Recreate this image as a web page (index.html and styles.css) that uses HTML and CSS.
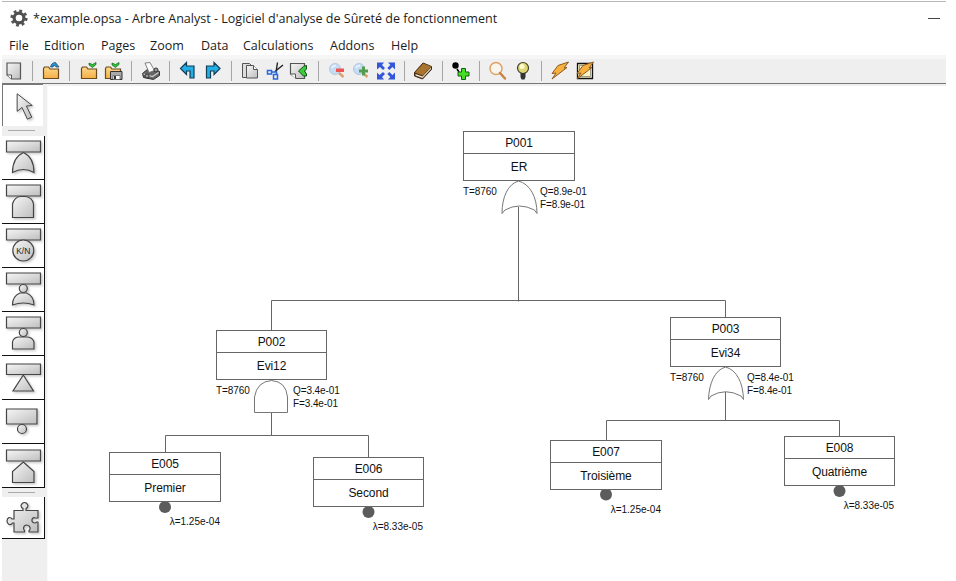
FILE: index.html
```html
<!DOCTYPE html>
<html lang="fr">
<head>
<meta charset="utf-8">
<title>Arbre Analyst</title>
<link rel="stylesheet" href="styles.css">
</head>
<body>
<svg class="defs" width="0" height="0">
  <defs>
    <linearGradient id="metal" x1="0" y1="0" x2="1" y2="1"><stop offset="0" stop-color="#f6f6f6"/><stop offset="1" stop-color="#bebebe"/></linearGradient>
    <linearGradient id="gold" x1="0" y1="0" x2="0" y2="1"><stop offset="0" stop-color="#ffd98a"/><stop offset="1" stop-color="#f4ae45"/></linearGradient>
    <filter id="shade" x="-20%" y="-20%" width="150%" height="150%"><feDropShadow dx="1.5" dy="1.5" stdDeviation="1" flood-color="#000" flood-opacity=".22"/></filter>
    <symbol id="folder" viewBox="0 0 20 20"><path d="M2.500 17.500V7.500l1-1.500h4l1.500 2h8.500v9.500z" fill="url(#gold)" stroke="#6b4a20" stroke-width="1.200"/></symbol>
    <symbol id="bolt" viewBox="0 0 20 20"><path d="M8 4.500L18.500 1l-4.500 6 3-.5L2 18l4-6-4 .5z" fill="#f8b040" stroke="#8a5a20"/></symbol>
    <symbol id="lens" viewBox="0 0 20 20"><path d="M11 11l5.500 5" stroke="#dda070" stroke-width="2.500"/><circle cx="8" cy="8" r="5.500" fill="#c4dcf4" stroke="#b4c8e0"/><path d="M5 7q1-2.500 4-2.500" stroke="#eef6ff" stroke-width="1.500" fill="none"/></symbol>
  </defs>
</svg>
<div class="window">
  <header class="titlebar">
    <svg class="gear" viewBox="0 0 18 18"><circle cx="9" cy="9" r="7.200" fill="none" stroke="#555" stroke-width="2.800" stroke-dasharray="2.830 2.825"/><circle cx="9" cy="9" r="4.900" fill="none" stroke="#505050" stroke-width="3.200"/></svg>
    <span class="title">*example.opsa - Arbre Analyst - Logiciel d'analyse de Sûreté de fonctionnement</span>
    <span class="minimize"></span>
  </header>
  <nav class="menu">
    <span class="w35">File</span><span class="w57">Edition</span><span class="w49">Pages</span><span class="w51">Zoom</span><span class="w42">Data</span><span class="w87">Calculations</span><span class="w61">Addons</span><span>Help</span>
  </nav>
  <div class="toolbar">
    <div class="group"><svg viewBox="0 0 20 20"><path d="M3 2h13.500v16h-9L3 14z" fill="url(#metal)" stroke="#555" stroke-width="1.200"/><path d="M3 14h4.500v4" fill="#fff" stroke="#555"/></svg></div>
    <div class="group"><svg viewBox="0 0 20 20"><use href="#folder"/><path d="M9.500 6q1-4.500 5-4.500L18 6h-3l-1-1.500Q12 4.500 12 6z" fill="#2595d0" stroke="#173f60" stroke-width=".7"/></svg></div>
    <div class="group"><svg viewBox="0 0 20 20"><use href="#folder"/><path d="M10 2l3.500 1.500L17 1.500v2l-3.500 3L10 4z" fill="#31c43b" stroke="#12611a" stroke-width=".7"/></svg><svg viewBox="0 0 20 20"><use href="#folder"/><path d="M9 2l3.500 1.500L16 1.500v2l-3.500 3L9 4z" fill="#31c43b" stroke="#12611a" stroke-width=".7"/><path d="M7.500 10.500h11.500v8H7.500z" fill="#aaa" stroke="#333"/><path d="M10 14.500h7v4h-7z" fill="#fff" stroke="#444" stroke-width=".6"/><path d="M11 15h2v3h-2z" fill="#333"/></svg></div>
    <div class="group"><svg viewBox="0 0 20 20"><path d="M1.500 12.500l6-5 11 3v4l-6 4-10-2z" fill="#666" stroke="#333"/><path d="M4 2l5-.5 4.500 8-5.500 2z" fill="#fafafa" stroke="#666" stroke-width=".8"/><path d="M2.500 13l9 2.500 6-4" stroke="#ccc" fill="none" stroke-width="1.200"/><circle cx="6" cy="15" r="2" fill="#999" stroke="#333"/><circle cx="15" cy="9" r="2" fill="#999" stroke="#333"/></svg></div>
    <div class="group"><svg viewBox="0 0 20 20"><path d="M2.500 7.500l6-6v3.500h7.500v12h-4V10H8.500v3.500z" fill="#24aee6" stroke="#123d57" stroke-width="1.200"/></svg><svg viewBox="0 0 20 20"><path d="M17 7.500l-6-6v3.500H3.500v12h4V10H11v3.500z" fill="#24aee6" stroke="#123d57" stroke-width="1.200"/></svg></div>
    <div class="group"><svg viewBox="0 0 20 20"><path d="M2.500 2.500h7l3 3v11h-10z" fill="#ddd" stroke="#555"/><path d="M6.500 4.500h7l4 4v8.500h-11z" fill="url(#metal)" stroke="#555"/><path d="M13.500 4.500v4h4" fill="#fff" stroke="#555"/></svg><svg viewBox="0 0 20 20"><path d="M12.500 1.500L11 11M18 4l-8 6.500" stroke="#222" stroke-width="1.400"/><path d="M2.500 9.500h4v3.500h-4zM8.500 13.500h4v4.500h-4zM6.500 11h5v3" fill="none" stroke="#2868d8" stroke-width="1.500"/></svg><svg viewBox="0 0 20 20"><path d="M1.500 2.500h14v15h-8L1.500 13z" fill="url(#metal)" stroke="#555" stroke-width="1.200"/><path d="M1.500 13h5v4.500" fill="#fff" stroke="#555"/><path d="M17.500 4.500q-1 0-3 1L9.500 10l5 5h3V13l-2-3 2-2z" fill="#3ace3a" stroke="#164d1c"/></svg></div>
    <div class="group"><svg viewBox="0 0 20 20"><use href="#lens"/><path d="M9 7.500h8v3.500H9z" fill="#ef5550"/></svg><svg viewBox="0 0 20 20"><use href="#lens"/><path d="M11 5.500h3v3h3v3h-3v3h-3v-3H8v-3h3z" fill="#549c4f"/></svg><svg viewBox="0 0 20 20"><path d="M1 1.500h7L6 4l3 3-2 2-3-3-3 2.500zM19 1.500v7L16.500 6l-3.200 3-2-2 3-3-2.300-2.500zM1 18.500v-7L3.500 14 7 11l2 2-3 3 2 2.500zM19 18.500h-7l2.300-2.500-3-3 2-2 3.200 3L19 11.500z" fill="#3457d9"/></svg></div>
    <div class="group"><svg viewBox="0 0 20 20"><path d="M1.500 11.500L10 2l8.500 3.500v3L9.500 18l-8-3z" fill="#4b3115" stroke="#40280e"/><path d="M2 11.500L10.200 2.500l8 3-8.500 9z" fill="#a8742e"/><path d="M2.500 13l7 2.500 8.500-9v1.500l-8.500 9-7-2.500z" fill="#f0e8d8"/></svg></div>
    <div class="group"><svg viewBox="0 0 20 20"><circle cx="4.500" cy="4.500" r="3.200" fill="#000"/><path d="M6 8l2 3" stroke="#000" stroke-width="1.500"/><path d="M10.500 7.500h4V11H18v4h-3.500v3.500h-4V15H7v-4h3.500z" fill="#48dd25" stroke="#145d19"/></svg></div>
    <div class="group"><svg viewBox="0 0 20 20"><circle cx="8" cy="7.500" r="6" fill="#f8f5ee" stroke="#dfa267" stroke-width="1.500"/><path d="M12 12l5 5.500" stroke="#c98343" stroke-width="2.500" stroke-linecap="round"/></svg><svg viewBox="0 0 20 20"><circle cx="10" cy="7" r="5.500" fill="#ded774" stroke="#40402c" stroke-width="1.200"/><circle cx="9" cy="5.500" r="2.500" fill="#fffbd0"/><path d="M7.500 12h5v4l-1 2.500h-3l-1-2.500z" fill="#333"/></svg></div>
    <div class="group"><svg viewBox="0 0 20 20"><use href="#bolt"/></svg><svg viewBox="0 0 20 20"><path d="M2.500 2.500h15v15h-15z" fill="#fbf3c4" stroke="#111" stroke-width="1.300"/><path d="M4.500 4.500h11v11h-11z" fill="none" stroke="#777" stroke-width=".7"/><use href="#bolt"/></svg></div>
  </div>
  <main class="workspace">
    <aside class="palette">
      <div class="tool pressed"><svg viewBox="0 0 41 41"><path d="M14.500 8.500v18l5-4 5.500 12 4.500-2-5.500-11.500 6-.5z" fill="url(#metal)" stroke="#444" filter="url(#shade)"/></svg></div>
      <div class="rule"></div>
      <div class="tool"><svg viewBox="0 0 42 44"><g class="shape"><path d="M4.500 5h34v11h-34z"/><path d="M10.500 36.500q0-15 11-20 10.500 5 10.500 20-10.500-6-21.500 0z"/></g></svg></div>
      <div class="tool"><svg viewBox="0 0 42 44"><g class="shape"><path d="M4.500 5h34v11h-34z"/><path d="M10.500 37.500V24q2-7 8-7.500h5q7 1 8 7.500v13.500z"/></g></svg></div>
      <div class="tool"><svg viewBox="0 0 42 44"><g class="shape"><path d="M4.500 5h34v11h-34z"/><circle cx="21.300" cy="26.500" r="10.500"/></g><text class="kn" x="21.300" y="29.500">K/N</text></svg></div>
      <div class="tool"><svg viewBox="0 0 42 44"><g class="shape"><path d="M4.500 5h34v11h-34z"/><path d="M10.500 37q0-9 7.500-12h6.500q7.500 3 7.500 12-10.500-4-21.500 0z"/><circle cx="21.300" cy="20.500" r="4"/></g></svg></div>
      <div class="tool"><svg viewBox="0 0 42 44"><g class="shape"><path d="M4.500 5h34v11h-34z"/><path d="M10.500 37v-7q1-5 7-5h7q6 0 7.500 5v7z"/><circle cx="21.300" cy="20.500" r="4"/></g></svg></div>
      <div class="tool"><svg viewBox="0 0 42 44"><g class="shape"><path d="M4.500 8h34v10.500h-34z"/><path d="M21.300 19L11 35h20.500z"/></g></svg></div>
      <div class="tool"><svg viewBox="0 0 42 44"><g class="shape"><path d="M4.500 9h30.500v15h-30.500z"/><circle cx="20" cy="29" r="4.500"/></g></svg></div>
      <div class="tool"><svg viewBox="0 0 42 44"><g class="shape"><path d="M4.500 6h34v11h-34z"/><path d="M21.300 18L32 27.500V38.500H10.500v-11z"/></g></svg></div>
      <div class="rule low"></div>
      <div class="tool last"><svg viewBox="0 0 42 44"><path class="shape" d="M12 13.500h9v-2q-2-1-2-3 1-3 3.500-3t3.500 3q0 2-2 3v2h12v7.500h-3q-2-1-3 1.500-.5 3 2.500 3.500 2 0 2-1h1.500v10H27v-1.500q1.500-1 1-3-1-2.500-3.500-2.500t-3 3q0 1.500 1 2.500v1.500H12V26h-1.500q-1 2-3.500 1.500-2-1-2-3.500t2-3.500q2.500 0 3 1.500h2z"/></svg></div>
    </aside>
    <section class="canvas">
      <svg class="wires" viewBox="48 86 898 495">
        <path d="M518.500 207V301.500M271.500 330V300.500H725.500V317M271.500 412V435.500M165.500 452V435.500H368.500V458M725.500 392V420.500M606.500 440V420.500H839.500V437"/>
        <g class="gate"><path d="M502 213.500C502 197 508 184 518.500 181 530 184 537 197 537 213.500L534.500 210Q519 202 505 210z"/><path d="M708.500 399.500C709 383 715 370 725.500 367 737 370 743 383 743.500 399.500L741 396Q725.500 387.500 711 396z"/><path d="M254.500 412.500V397Q257 381.500 271.500 380.500 286 381.500 287.500 397V412.500z"/></g>
        <g class="event"><circle cx="165" cy="507" r="6"/><circle cx="368.500" cy="512" r="6"/><circle cx="606" cy="494.500" r="6"/><circle cx="839.500" cy="491" r="6"/></g>
      </svg>
      <article class="node p001"><b>P001</b><p>ER</p><i>T=8760</i><em>Q=8.9e-01<br>F=8.9e-01</em></article>
      <article class="node p002"><b>P002</b><p>Evi12</p><i>T=8760</i><em>Q=3.4e-01<br>F=3.4e-01</em></article>
      <article class="node p003"><b>P003</b><p>Evi34</p><i>T=8760</i><em>Q=8.4e-01<br>F=8.4e-01</em></article>
      <article class="node e005"><b>E005</b><p>Premier</p><u>λ=1.25e-04</u></article>
      <article class="node e006"><b>E006</b><p>Second</p><u>λ=8.33e-05</u></article>
      <article class="node e007"><b>E007</b><p>Troisième</p><u>λ=1.25e-04</u></article>
      <article class="node e008"><b>E008</b><p>Quatrième</p><u>λ=8.33e-05</u></article>
    </section>
  </main>
</div>
</body>
</html>
```
FILE: styles.css
```css
* { box-sizing: border-box; }
body { margin: 0; background: #fff; height: 581px; overflow: hidden; font-family: "Open Sans", "Noto Sans", sans-serif; font-size: 12.5px; color: #1c1c1c; }
.defs { display: block; height: 0; }
.window { margin: 1px 10px 0 2px; height: 580px; border-top: 1px solid #b4b8b6; display: flex; flex-direction: column; }
.titlebar { height: 34px; display: flex; align-items: center; padding: 0 6px 2px 8px; }
.gear { width: 18px; height: 18px; margin-right: 5px; }
.title { white-space: nowrap; font-size: 12.55px; }
.minimize { margin-left: auto; width: 12px; height: 1px; background: #444; }
.menu { height: 19px; display: flex; align-items: center; padding: 1px 0 0 7px; line-height: 18px; }
.w35 { width: 35px; } .w57 { width: 57px; } .w49 { width: 49px; } .w51 { width: 51px; }
.w42 { width: 42px; } .w87 { width: 87px; } .w61 { width: 61px; }
.toolbar { height: 29px; background: #efefef; border-top: 4px solid #f6f6f6; border-bottom: 1px solid #777; display: flex; align-items: center; padding: 0 0 1px 2px; }
.group { display: flex; gap: 4.750px; }
.group + .group { margin-left: 8.150px; border-left: 1px solid #a5a5a5; padding-left: 8.150px; }
.group svg { display: block; width: 20px; height: 20px; }
.workspace { flex: 1; display: flex; min-height: 0; }
.palette { width: 45px; background: #efefef; }
.tool { width: 43px; height: 44px; background: #fff; border-right: 1px solid #111; border-bottom: 1px solid #111; }
.tool svg { display: block; width: 42px; height: 44px; }
.tool.pressed { width: 41px; height: 42px; border: 0 solid #777; border-width: 1px 0 0 1px; }
.tool.pressed svg { width: 40px; height: 41px; }
.tool.last { height: 42px; }
.rule { width: 27px; height: 1px; background: #aaa; margin: 4px 0 5px 6px; }
.rule.low { margin: 4px 0 4px 6px; }
.shape { fill: url(#metal); stroke: #444; stroke-width: 1.2px; filter: url(#shade); }
.kn { font: 8.5px "Liberation Sans", sans-serif; text-anchor: middle; fill: #222; }
.canvas { position: relative; flex: 1; border-top: 2px solid #f0f0f0; border-left: 1px solid #fafafa; }
.wires { display: block; width: 898px; height: 495px; fill: none; stroke: #666; stroke-width: 1px; }
.gate { fill: #fff; stroke: #777; }
.event { fill: #5c5c5c; stroke: none; }
.node { position: absolute; width: 111px; height: 50px; border: 1px solid #666; background: #fff; text-align: center; font: 12px "Liberation Sans", Arial, sans-serif; letter-spacing: -.1px; color: #111; }
.node b { display: block; height: 22px; line-height: 22px; font-weight: normal; border-bottom: 1px solid #666; }
.node p { margin: 0; height: 26px; line-height: 26px; }
.node i, .node em, .node u { position: absolute; font-size: 10px; font-style: normal; text-decoration: none; line-height: 13px; white-space: nowrap; text-align: left; }
.node i { left: -1px; top: 53px; }
.node em { left: 76px; top: 53px; }
.node u { right: 0; top: 62px; letter-spacing: 0; }
.p001, .e005, .e007 { width: 112px; }
.p001 { left: 415px; top: 45px; }
.p002 { left: 168px; top: 244px; }
.p003 { left: 622px; top: 231px; }
.e005 { left: 61px; top: 366px; }
.e006 { left: 265px; top: 371px; }
.e007 { left: 502px; top: 354px; }
.e008 { left: 736px; top: 350px; }
```
